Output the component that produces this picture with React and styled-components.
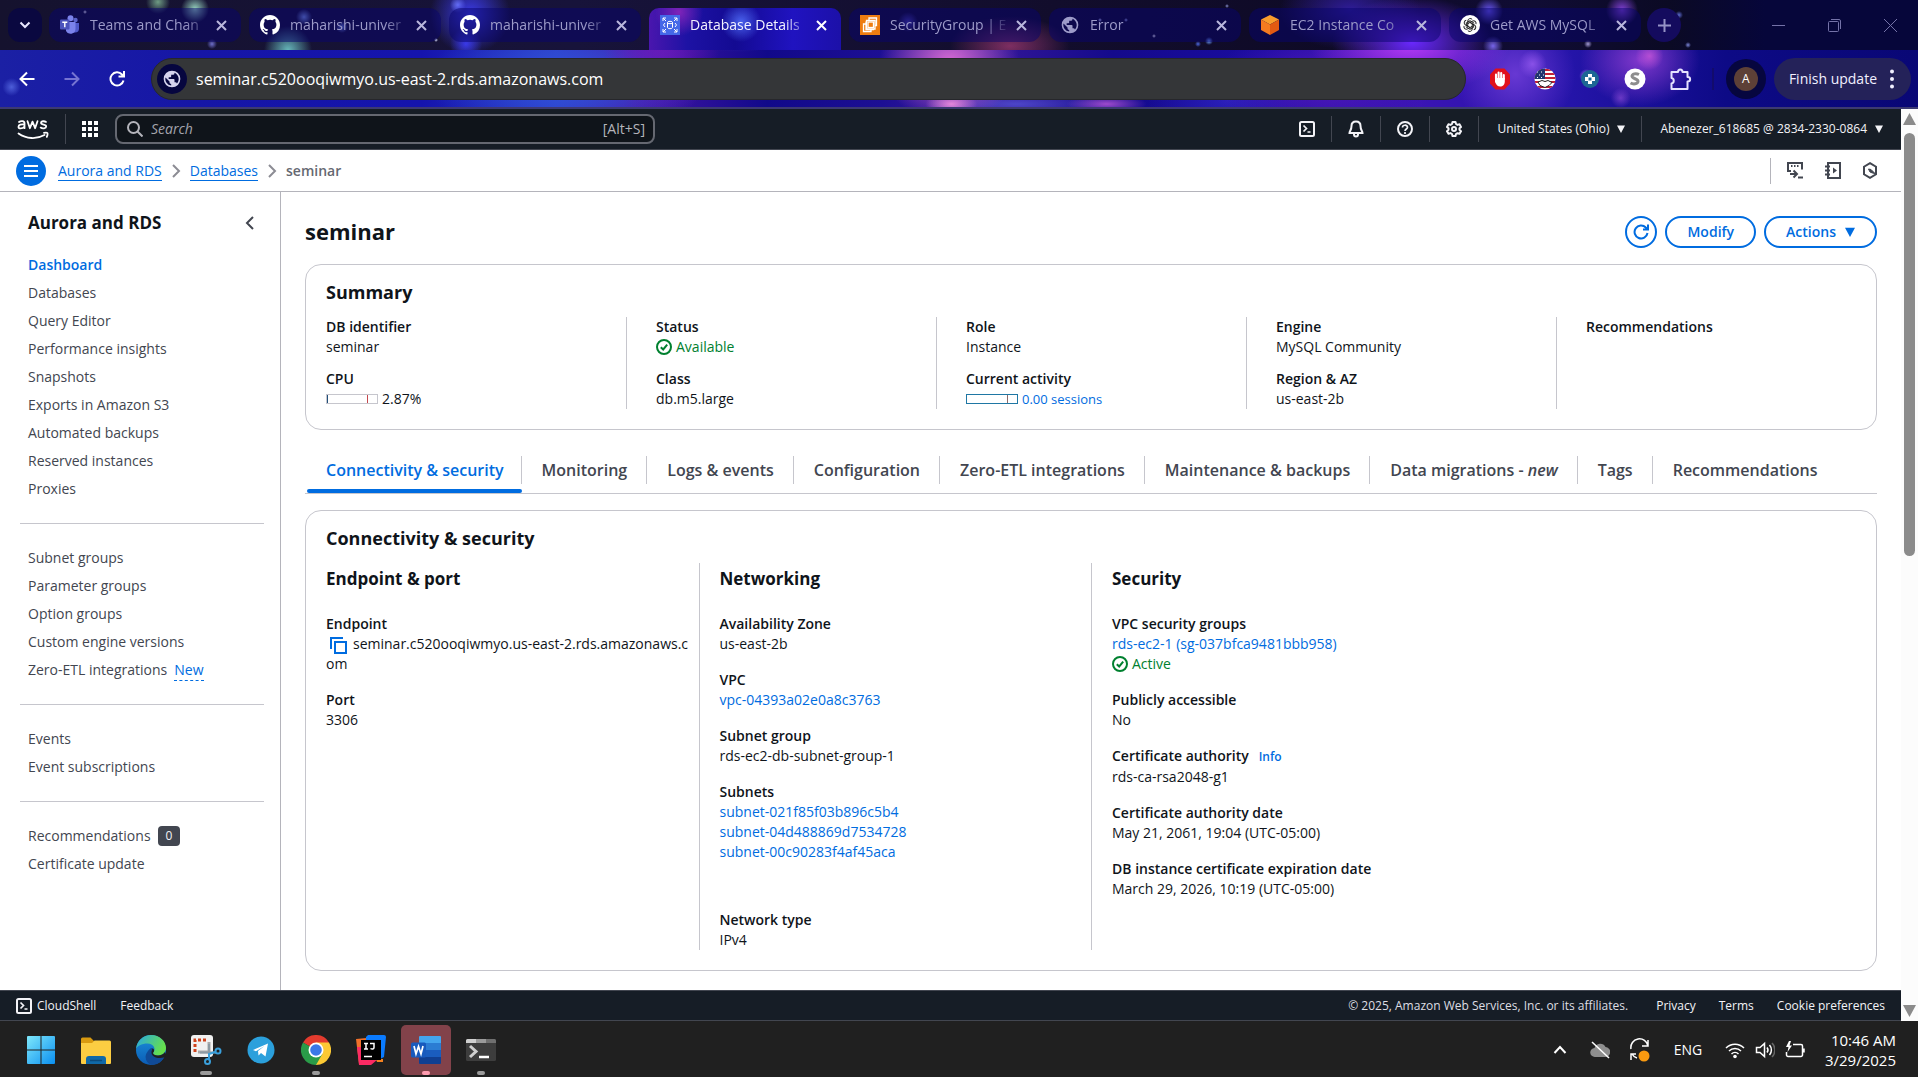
import React from "react";
import styled, { createGlobalStyle, css } from "styled-components";

const GlobalStyle = createGlobalStyle`
  *, *::before, *::after { box-sizing: border-box; }
  html, body { margin: 0; padding: 0; }
  body {
    font-family: "Open Sans", "Noto Sans", sans-serif;
    font-size: 14px;
    line-height: 20px;
    color: #0f141a;
    background: #ffffff;
  }
  button, input { font: inherit; color: inherit; }
  button { cursor: pointer; border: 0; background: none; padding: 0; }
  a { text-decoration: none; color: inherit; }
  h1, h2, h3, p, ul, ol, dl, dd { margin: 0; padding: 0; }
  ul, ol { list-style: none; }
  svg { display: block; flex: none; }
`;

const Screen = styled.div`
  min-height: 100vh;
  display: flex;
  flex-direction: column;
`;

/* ---------- browser frame ---------- */

const star = (x, y, r, c) => `radial-gradient(circle at ${x} ${y}px, ${c} 0, transparent ${r}px)`;
const glow = (x, y, rx, ry, c) => `radial-gradient(ellipse ${rx}px ${ry}px at ${x} ${y}px, ${c}, transparent)`;

const frameSky = [
  star("0.6%", 87, 9, "rgba(90,110,230,.8)"),
  star("82.7%", 76, 7, "rgba(190,150,250,.9)"),
  star("79.9%", 64, 14, "rgba(150,90,240,.8)"),
  star("86%", 56, 14, "rgba(210,90,220,.7)"),
  star("84.5%", 98, 10, "rgba(150,80,220,.6)"),
  glow("49.5%", 62, 70, 60, "rgba(222,110,214,.95)"),
  glow("49.6%", 104, 26, 12, "rgba(240,150,225,.95)"),
  glow("57.7%", 104, 40, 10, "rgba(190,90,220,.8)"),
  glow("53%", 104, 90, 14, "rgba(90,90,220,.7)"),
  glow("73.5%", 44, 100, 50, "rgba(190,60,250,.95)"),
  glow("79%", 74, 60, 60, "rgba(110,60,215,.9)"),
  glow("85.5%", 60, 60, 46, "rgba(140,60,210,.9)"),
  glow("69%", 84, 110, 60, "rgba(88,26,190,.8)"),
  glow("64%", 100, 80, 40, "rgba(50,40,200,.7)"),
  glow("34.5%", 30, 60, 90, "rgba(120,24,190,.9)"),
  glow("29.5%", 80, 140, 60, "rgba(50,86,220,.95)"),
  glow("38.5%", 22, 70, 30, "rgba(60,80,230,.9)"),
  "linear-gradient(90deg, #1b20a4 0, #1616a6 10%, #1514ad 22%, #2b3ac6 29%, #4617a8 33%, #11098a 40%, #1d0f94 46%, #3b1a9c 50%, #140a8c 58%, #1a0ca0 66%, #3a14b4 74%, #2414a8 82%, #0d0a86 90%, #090775 100%)",
].join(",");

const stripStars = [
  star("158px", 2, 12, "rgba(120,170,140,.9)"),
  star("195px", 9, 14, "rgba(150,210,190,1)"),
  star("288px", 50, 24, "rgba(110,200,200,.9)"),
  star("304px", 17, 8, "rgba(120,150,230,1)"),
  star("342px", 27, 6, "rgba(120,150,240,.9)"),
  star("470px", 14, 40, "rgba(60,60,240,.95)"),
  star("458px", 5, 8, "#9bb0ff"),
  star("466px", 44, 16, "rgba(60,60,250,.9)"),
  star("212px", 44, 5, "rgba(120,120,220,.9)"),
  star("85px", 12, 2, "#ffffff"),
  star("436px", 40, 2, "#d9dfff"),
  star("908px", 22, 10, "rgba(80,70,200,.8)"),
  star("1100px", 20, 2, "#c3c9ff"),
  star("1126px", 20, 2, "#9ca7e6"),
  star("1154px", 36, 2, "#ffffff"),
  star("1209px", 41, 4, "#6fa0ff"),
  star("1198px", 44, 3, "#4d68e0"),
  star("1227px", 6, 2, "#8a90d0"),
  star("1489px", 11, 14, "rgba(110,90,255,.95)"),
  star("1493px", 46, 10, "rgba(130,110,255,.9)"),
  star("1622px", 10, 16, "rgba(140,70,230,.9)"),
  star("1588px", 44, 4, "rgba(200,190,255,.8)"),
  star("1679px", 15, 4, "#5c6ad0"),
  star("1688px", 45, 3, "#7c86d8"),
].join(",");

const BrowserFrame = styled.header`
  background: ${frameSky};
  border-bottom: 2px solid #3c3a72;
`;

const TabStrip = styled.div`
  height: 50px;
  display: flex;
  align-items: flex-end;
  padding-left: 8px;
  background: ${stripStars},
    radial-gradient(ellipse 80px 46px at 1412px 42px, rgba(106, 40, 255, 1), transparent),
    radial-gradient(ellipse 70px 40px at 1350px 10px, rgba(60, 36, 200, 0.7), transparent),
    radial-gradient(ellipse 60px 30px at 1010px 46px, rgba(170, 60, 120, 0.7), transparent),
    linear-gradient(90deg, #15122e 0, #17133a 30%, #120d2c 55%, #0e0a26 70%, #100c34 80%, #0b0a24 87%, #06063a 92%, #06063a 100%);
`;

const RoundButton = styled.button`
  width: ${(p) => p.$size}px;
  height: ${(p) => p.$size}px;
  border-radius: ${(p) => p.$radius || p.$size}px;
  display: grid;
  place-items: center;
  flex: none;
  color: ${(p) => p.$ink || "#e8e6ff"};
  background: ${(p) => p.$fill || "transparent"};
`;

const TabSearch = styled.div`
  height: 42px;
  margin-right: 7px;
`;

const BrowserTabs = styled.ul`
  display: flex;
  gap: 8px;
  min-width: 0;
`;

const BrowserTab = styled.li`
  position: relative;
  flex: 0 1 192px;
  width: 192px;
  min-width: 60px;
  height: 42px;
  padding: 0 10px 8px 11px;
  display: flex;
  align-items: center;
  border-radius: 10px;
  color: ${(p) => (p.$active ? "#f4f3ff" : "#9d9bc9")};
  &::before {
    content: "";
    position: absolute;
    inset: 0 0 8px;
    border-radius: 12px;
    background: rgba(8, 3, 110, 0.5);
  }
  > * { position: relative; }
  ${(p) =>
    p.$active &&
    css`
      &::before {
        inset: 0;
        border-radius: 10px 10px 0 0;
        background: radial-gradient(circle at 92px 14px, #4a62ee 0, transparent 20px),
          radial-gradient(circle at 30px 4px, rgba(150, 40, 190, 0.8) 0, transparent 24px),
          linear-gradient(90deg, #4a16ae, #1d12a4 20%, #130a92 45%, #2013c0 75%, #1c10a8);
      }
    `}
`;

const TabLink = styled.a`
  flex: 1;
  min-width: 0;
  display: flex;
  align-items: center;
  gap: 10px;
`;

const TabTitle = styled.span`
  flex: 1;
  min-width: 0;
  overflow: hidden;
  white-space: nowrap;
  mask-image: linear-gradient(90deg, #000 78%, transparent 100%);
`;

const NewTab = styled.div`
  height: 42px;
  margin-left: 6px;
`;

const WindowControls = styled.div`
  margin-left: auto;
  height: 50px;
  display: flex;
  color: #7472a8;
`;

const WindowButton = styled.button`
  width: 56px;
  display: grid;
  place-items: center;
`;

const Toolbar = styled.div`
  height: 57px;
  display: flex;
  align-items: center;
  padding: 0 7px 0 11px;
`;

const NavButtons = styled.div`
  display: flex;
  gap: 13px;
  margin-right: 18px;
`;

const Omnibox = styled.label`
  flex: 1;
  min-width: 0;
  height: 42px;
  display: flex;
  align-items: center;
  gap: 9px;
  padding: 0 5px;
  border: 1px solid #26272b;
  border-radius: 21px;
  background: #343638;
`;

const Bubble = styled.span`
  width: 30px;
  height: 30px;
  border-radius: 50%;
  display: grid;
  place-items: center;
  background: #06063f;
  color: #d6d4ee;
`;

const AddressInput = styled.input`
  flex: 1;
  min-width: 0;
  border: 0;
  outline: 0;
  padding: 0;
  background: transparent;
  color: #ffffff;
  font-size: 16px;
  line-height: 24px;
`;

const Extensions = styled.div`
  display: flex;
  gap: 21px;
  margin-left: 22px;
`;

const ToolbarRule = styled.span`
  width: 2px;
  height: 22px;
  margin: 0 12px 0 20px;
  background: #120b6c;
`;

const Avatar = styled.span`
  width: 24px;
  height: 24px;
  border-radius: 50%;
  display: grid;
  place-items: center;
  background: #5d4037;
  color: #ffffff;
  font-size: 12px;
`;

const UpdateButton = styled.button`
  height: 42px;
  margin-left: 8px;
  padding: 0 11px 0 15px;
  display: flex;
  align-items: center;
  gap: 7px;
  border-radius: 21px;
  background: #242259;
  color: #f1f0ff;
  white-space: nowrap;
`;

/* ---------- page viewport ---------- */

const Viewport = styled.div`
  flex: 1;
  display: flex;
`;

const Page = styled.div`
  flex: 1;
  min-width: 0;
  display: flex;
  flex-direction: column;
`;

const ScrollTrack = styled.div`
  width: 17px;
  flex: none;
  display: flex;
  flex-direction: column;
  align-items: center;
  justify-content: space-between;
  padding: 4px 0;
  background: #fcfcfc;
`;

const ScrollBody = styled.div`
  flex: 1;
  width: 11px;
  padding: 8px 0;
`;

const ScrollThumb = styled.div`
  height: 49%;
  border-radius: 6px;
  background: #8b8b8b;
`;

const AwsHeader = styled.div`
  height: 41px;
  display: flex;
  align-items: center;
  padding: 0 18px 0 17px;
  background: #161d26;
  border-bottom: 1px solid #424650;
  color: #f3f3f7;
  font-size: 12px;
`;

const HeaderRule = styled.span`
  width: 1px;
  height: 30px;
  margin: 0 16px;
  background: #424650;
`;

const SearchBox = styled.label`
  flex: 0 1 540px;
  height: 30px;
  margin-left: 17px;
  padding: 0 8px 0 10px;
  display: flex;
  align-items: center;
  gap: 8px;
  border: 2px solid #656871;
  border-radius: 8px;
  background: #0f141a;
  color: #b4b4bb;
  font-size: 14px;
`;

const SearchInput = styled.input`
  flex: 1;
  min-width: 0;
  border: 0;
  outline: 0;
  padding: 0;
  background: transparent;
  &::placeholder { color: #a4a4ad; font-style: italic; opacity: 1; }
`;

const HeaderTools = styled.div`
  margin-left: auto;
  display: flex;
  align-items: center;
`;

const HeaderTool = styled.button`
  height: 26px;
  min-width: 49px;
  display: flex;
  align-items: center;
  justify-content: center;
  gap: 8px;
  border-left: ${(p) => (p.$first ? 0 : "1px solid #424650")};
  padding: ${(p) => (p.$text ? "0 16px 0 18px" : 0)};
  white-space: nowrap;
  font-weight: 500;
  &:last-child { padding-right: 0; }
`;

const CrumbBar = styled.div`
  height: 42px;
  display: flex;
  align-items: center;
  padding: 0 23px 0 16px;
  border-bottom: 1px solid #b4b4bb;
`;

const Crumbs = styled.ol`
  display: flex;
  align-items: center;
  gap: 7px;
  margin-left: 12px;
`;

const Crumb = styled.li`
  display: flex;
  align-items: center;
  gap: 7px;
  color: #656871;
  font-weight: ${(p) => (p.$current ? 600 : 400)};
  svg { color: #8c8c94; }
`;

const CrumbLink = styled.a`
  color: #006ce0;
  line-height: 19px;
  border-bottom: 1px solid #006ce0;
`;

const PanelTools = styled.div`
  margin-left: auto;
  height: 26px;
  display: flex;
  align-items: center;
  gap: 20px;
  padding-left: 15px;
  border-left: 1px solid #b4b4bb;
  color: #424650;
`;

const Workspace = styled.div`
  flex: 1;
  display: flex;
`;

const Sidebar = styled.nav`
  width: 281px;
  flex: none;
  padding: 19px 16px 20px 20px;
  border-right: 1px solid #b4b4bb;
  color: #424650;
`;

const SidebarTitle = styled.div`
  display: flex;
  align-items: center;
  justify-content: space-between;
  padding: 0 7px 0 8px;
  margin-bottom: 16px;
`;

const SidebarHeading = styled.h2`
  font-size: 17px;
  line-height: 24px;
  font-weight: 700;
  color: #0f141a;
`;

const NavGroup = styled.ul`
  & + & {
    margin-top: 20px;
    padding-top: 20px;
    border-top: 1px solid #c6c6cd;
  }
`;

const NavItem = styled.li`
  min-height: 28px;
  padding: 0 8px;
  display: flex;
  align-items: center;
  gap: 7px;
  color: ${(p) => (p.$current ? "#006ce0" : "inherit")};
  font-weight: ${(p) => (p.$current ? 600 : 400)};
`;

const NewFlag = styled.a`
  color: #006ce0;
  border-bottom: 1px dashed #006ce0;
`;

const CountBadge = styled.span`
  padding: 0 8px;
  border-radius: 4px;
  background: #424650;
  color: #f3f3f7;
  font-size: 12px;
  font-weight: 500;
`;

const Content = styled.main`
  flex: 1;
  min-width: 0;
  padding: 24px 24px 19px;
`;

const TitleRow = styled.div`
  display: flex;
  align-items: center;
  gap: 8px;
  height: 32px;
  margin-bottom: 16px;
`;

const PageTitle = styled.h1`
  flex: 1;
  padding-bottom: 2px;
  font-size: 22px;
  line-height: 30px;
  font-weight: 700;
`;

const PillButton = styled.button`
  height: 32px;
  min-width: 32px;
  padding: ${(p) => (p.$icon ? 0 : "0 20px")};
  display: flex;
  align-items: center;
  justify-content: center;
  gap: 9px;
  border: 2px solid #006ce0;
  border-radius: 20px;
  color: #006ce0;
  font-weight: 600;
`;

const Card = styled.section`
  border: 1px solid #c6c6cd;
  border-radius: 16px;
  padding: 14px 0 20px;
`;

const CardTitle = styled.h2`
  padding: 0 20px;
  margin-bottom: 12px;
  font-size: 18px;
  line-height: 26px;
  font-weight: 700;
`;

const SummaryGrid = styled.dl`
  display: grid;
  grid-template-columns: repeat(5, 1fr);
  padding: 0 10px;
`;

const SummaryColumn = styled.div`
  display: flex;
  flex-direction: column;
  gap: 12px;
  padding-left: 29px;
  border-left: 1px solid #c6c6cd;
  min-height: 92px;
  &:first-child { border-left: 0; padding-left: 10px; }
`;

const DetailGrid = styled.div`
  display: grid;
  grid-template-columns: repeat(4, 1fr);
`;

const DetailColumn = styled.section`
  padding: 3px 8px 0 20px;
  border-left: 1px solid #c6c6cd;
  &:first-child { border-left: 0; }
`;

const DetailHeading = styled.h3`
  margin-bottom: 22px;
  font-size: 17px;
  line-height: 26px;
  font-weight: 700;
`;

const DetailList = styled.dl`
  display: flex;
  flex-direction: column;
  gap: 16px;
`;

const Term = styled.dt`
  font-weight: 600;
`;

const Value = styled.dd`
  word-break: break-all;
`;

const Field = styled.div`
  padding-top: ${(p) => (p.$apart ? 32 : 0)}px;
`;

const TextLink = styled.a`
  color: #006ce0;
  font-size: ${(p) => (p.$small ? 13 : 14)}px;
`;

const InfoLink = styled.a`
  margin-left: 10px;
  color: #006ce0;
  font-size: 12px;
`;

const Status = styled.span`
  display: flex;
  align-items: center;
  gap: 4px;
  color: #00802f;
`;

const InlineRow = styled.span`
  display: flex;
  align-items: center;
  gap: 4px;
`;

const Meter = styled.span`
  width: 52px;
  height: 10px;
  display: flex;
  justify-content: space-between;
  border: 1px solid ${(p) => p.$edge};
  padding-right: 9px;
  &::before { content: ""; width: 1px; background: ${(p) => p.$level}; }
  &::after { content: ""; width: 1px; background: ${(p) => p.$limit}; }
`;

const CopyButton = styled.button`
  display: inline-block;
  vertical-align: middle;
  margin: 0 6px 0 4px;
  color: #006ce0;
`;

const TabBar = styled.div`
  display: flex;
  margin: 26px 0 16px;
  border-bottom: 1px solid #c6c6cd;
`;

const PageTab = styled.button`
  display: flex;
  flex-direction: column;
  gap: 5px;
  color: ${(p) => (p.$selected ? "#006ce0" : "#424650")};
  font-size: 16px;
  font-weight: 600;
  white-space: nowrap;
  &::after {
    content: "";
    height: 4px;
    align-self: stretch;
    margin-left: 2px;
    border-radius: 2px;
    background: ${(p) => (p.$selected ? "#006ce0" : "transparent")};
  }
`;

const PageTabLabel = styled.span`
  line-height: 28px;
  padding: ${(p) => (p.$first ? "0 17px 0 21px" : "0 19px 0 20px")};
  border-right: ${(p) => (p.$last ? 0 : "1px solid #c6c6cd")};
`;

const Footer = styled.footer`
  height: 31px;
  display: flex;
  align-items: center;
  padding: 0 16px;
  border-top: 1px solid #424650;
  border-bottom: 1px solid #424650;
  background: #161d26;
  color: #f3f3f7;
  font-size: 12px;
`;

const FooterButton = styled.button`
  display: flex;
  align-items: center;
  gap: 5px;
  margin-right: 24px;
  font-weight: 500;
`;

const Legal = styled.div`
  margin-left: auto;
  display: flex;
  gap: 23px;
`;

const Copyright = styled.span`
  color: #dedee3;
  margin-right: 5px;
`;

/* ---------- taskbar ---------- */

const Taskbar = styled.div`
  height: 56px;
  display: flex;
  align-items: center;
  justify-content: space-between;
  padding: 2px 22px 0 16px;
  background: #202020;
  color: #ffffff;
`;

const TaskApps = styled.div`
  display: flex;
  gap: 5px;
`;

const TaskApp = styled.button`
  position: relative;
  width: 50px;
  height: 50px;
  display: grid;
  place-items: center;
  border-radius: 5px;
  background: ${(p) => (p.$alert ? "#82424a" : "transparent")};
  &::after {
    content: "";
    position: absolute;
    left: 50%;
    bottom: 0;
    width: ${(p) => p.$mark || 0}px;
    height: 4px;
    border-radius: 2px;
    transform: translateX(-50%);
    background: ${(p) => (p.$alert ? "#ff9cb0" : "#9a9a9a")};
  }
`;

const Tray = styled.div`
  display: flex;
  align-items: center;
`;

const TrayButton = styled.button`
  width: ${(p) => p.$w || 40}px;
  display: grid;
  place-items: center;
`;

const TrayStatus = styled.button`
  display: flex;
  gap: 10px;
  margin: 0 20px 0 9px;
`;

const Clock = styled.time`
  text-align: right;
  font-size: 15px;
`;

/* ---------- icons ---------- */

const Svg = ({ s = 16, h, vb = "0 0 16 16", w = 2, children }) => (
  <svg width={s} height={h || s} viewBox={vb} fill="none" stroke="currentColor" strokeWidth={w} aria-hidden="true">
    {children}
  </svg>
);
const CloseX = () => (
  <Svg s={11} vb="0 0 11 11" w={2}><path d="M1 1l9 9M10 1l-9 9" /></Svg>
);
const Caret = ({ s = 8 }) => (
  <Svg s={s} vb="0 0 8 8" w={0}><path d="M0 0.5h8L4 8z" fill="currentColor" /></Svg>
);
const ShellIcon = () => (
  <Svg><rect x="1" y="1" width="14" height="14" rx="1.5" /><path d="M4.500 4.500l3 3-3 3M8.500 11h3" strokeWidth="1.700" /></Svg>
);
const Globe = ({ s = 18 }) => (
  <svg width={s} height={s} viewBox="0 0 24 24" fill="currentColor" aria-hidden="true">
    <path d="M12 2a10 10 0 100 20 10 10 0 000-20zm-1 17.930A8 8 0 014.200 10.200L9 15v1a2 2 0 002 2v1.930zm6.900-2.540A2 2 0 0016 16h-1v-3a1 1 0 00-1-1H8v-2h2a1 1 0 001-1V7h2a2 2 0 002-2v-.410a8 8 0 012.900 12.800z" />
  </svg>
);
const GithubIcon = () => (
  <svg width="20" height="20" viewBox="0 0 16 16" aria-hidden="true">
    <path fill="#fff" d="M8 0C3.58 0 0 3.58 0 8c0 3.54 2.29 6.53 5.47 7.59.4.07.55-.17.55-.38 0-.19-.01-.82-.01-1.49-2.01.37-2.53-.49-2.69-.94-.09-.23-.48-.94-.82-1.13-.28-.15-.68-.52-.01-.53.63-.01 1.08.58 1.23.82.72 1.21 1.87.87 2.33.66.07-.52.28-.87.51-1.07-1.78-.2-3.64-.89-3.64-3.95 0-.87.31-1.59.82-2.15-.08-.2-.36-1.02.08-2.12 0 0 .67-.21 2.2.82a7.6 7.6 0 014 0c1.53-1.04 2.2-.82 2.2-.82.44 1.1.16 1.92.08 2.12.51.56.82 1.27.82 2.15 0 3.07-1.87 3.75-3.65 3.95.29.25.54.73.54 1.48 0 1.07-.01 1.93-.01 2.2 0 .21.15.46.55.38A8 8 0 0016 8c0-4.42-3.58-8-8-8z" />
  </svg>
);
const TeamsIcon = () => (
  <svg width="20" height="20" viewBox="0 0 20 20" aria-hidden="true">
    <circle cx="15.5" cy="5" r="2.2" fill="#5b63c9" /><circle cx="10.5" cy="3.2" r="3" fill="#7b83eb" />
    <path d="M12 8h7v5.500a4 4 0 01-4 4h-2z" fill="#5059c9" /><path d="M6 7h9.500v7a5 5 0 01-9.500 2z" fill="#7b83eb" />
    <rect y="4.500" width="9.500" height="10" rx="1" fill="#4b53bc" /><path d="M2.300 7.200h5M4.800 7.200v5" stroke="#fff" strokeWidth="1.400" />
  </svg>
);
const RdsIcon = () => (
  <svg width="20" height="20" viewBox="0 0 20 20" fill="none" stroke="#fff" strokeWidth="1" aria-hidden="true">
    <rect width="20" height="20" fill="#4468e8" stroke="none" />
    <path d="M3 6V3h3M3 3l3 3M17 6V3h-3M17 3l-3 3M3 14v3h3M3 17l3-3M17 14v3h-3M17 17l-3-3" />
    <ellipse cx="10" cy="7.500" rx="2.500" ry="1.200" /><path d="M7.500 7.500v5c0 1.600 5 1.600 5 0v-5M5 8l-1.500 2L5 12M15 8l1.500 2-1.500 2" />
  </svg>
);
const Ec2Icon = () => (
  <svg width="20" height="20" viewBox="0 0 20 20" fill="none" stroke="#fff" strokeWidth="1.300" aria-hidden="true">
    <rect width="20" height="20" fill="#ee7d10" stroke="none" />
    <rect x="8" y="7" width="5.500" height="5.500" /><path d="M5.500 9H3.500v7.500h7.500v-1.500M6 6.500v8h8M9 5V3h7.500v7.500h-1.500M6.500 5.500h8.500v8.500H6.500z" />
  </svg>
);
const CubeIcon = () => (
  <svg width="20" height="20" viewBox="0 0 20 20" aria-hidden="true">
    <path d="M10 0l9 4.500-9 5-9-5z" fill="#f99d2c" /><path d="M1 4.500l9 5V20l-9-5z" fill="#f47b20" /><path d="M19 4.500l-9 5V20l9-5z" fill="#e35a12" />
  </svg>
);
const GptIcon = () => (
  <svg width="20" height="20" viewBox="0 0 20 20" fill="none" stroke="#222" strokeWidth="1" aria-hidden="true">
    <circle cx="10" cy="10" r="10" fill="#fff" stroke="none" />
    {[0, 60, 120, 180, 240, 300].map((a) => (
      <path key={a} transform={`rotate(${a} 10 10)`} d="M7.800 8.700V6a2.500 2.500 0 014.400-1.600M7.800 8.700l3.600-2.100 2.800 1.600" />
    ))}
  </svg>
);
const AwsLogo = () => (
  <svg width="32" height="22" viewBox="0 0 32 22" fill="none" stroke="#fff" strokeLinecap="round" aria-hidden="true">
    <path strokeWidth="1.800" d="M2 4c2-1.500 5.500-1.300 5.500 1.200v5M7.500 6.500C4.500 6 1.500 6.500 1.500 8.700s3.500 2.500 6 0" />
    <path strokeWidth="1.800" strokeLinejoin="round" d="M10.500 3.200l2.400 7 2.600-6.500 2.600 6.500 2.400-7" />
    <path strokeWidth="1.800" d="M29 3.900c-1.500-1-5-1-5 .9 0 2.400 5.200 1.300 5.200 3.700 0 2-3.700 2.400-5.500 1.100" />
    <path strokeWidth="1.800" d="M1.500 15.500c8 5.500 18 6 26 1.500M27 14.800c3.500-.8 4.500 0 2.800 4" />
  </svg>
);
const CheckCircle = () => (
  <Svg><circle cx="8" cy="8" r="7" /><path d="M4.800 8.200l2.400 2.300 4-4.800" /></Svg>
);
const GridIcon = () => (
  <svg width="16" height="16" viewBox="0 0 16 16" fill="#fff" aria-hidden="true">
    {[0, 6, 12].flatMap((x) => [0, 6, 12].map((y) => <rect key={x + "-" + y} x={x} y={y} width="4" height="4" />))}
  </svg>
);

const blockerIcon = (
  <svg width="24" height="24" viewBox="0 0 24 24" aria-hidden="true">
    <path d="M7.500 1.500h9l5.500 6v9l-5.500 6h-9l-5.500-6v-9z" fill="#e0101c" />
    <path d="M8 12V7.500M10.600 11V5.500M13.200 11V6M15.800 12V8" stroke="#fff" strokeWidth="2.100" strokeLinecap="round" />
    <path d="M7 11h9.800v3.500c0 3-2 5-4.600 5S8.500 18 7 15z" fill="#fff" />
  </svg>
);
const flagIcon = (
  <svg width="24" height="24" viewBox="0 0 24 24" aria-hidden="true">
    <defs><clipPath id="flagDisc"><circle cx="12" cy="12" r="10.500" /></clipPath></defs>
    <g clipPath="url(#flagDisc)">
      <rect width="24" height="24" fill="#fff" />
      <path d="M0 3h24M0 7h24M0 11h24M0 15h24M0 20h24" stroke="#c42035" strokeWidth="2" />
      <rect width="12" height="12" fill="#22356f" />
      <path d="M4 5h1M8 5h1M6 8h1M10 8h1M4 10.500h1M8 10.500h1" stroke="#fff" strokeWidth="1" />
      <path d="M5 15l4-1.500 3 1 3-1 4 2-3 3-4 2-5-2z" fill="#fff" stroke="#222" strokeWidth="1" />
    </g>
  </svg>
);
const crossIcon = (
  <svg width="24" height="24" viewBox="0 0 24 24" aria-hidden="true">
    <circle cx="12" cy="12" r="9" fill="#1d6794" /><path d="M12 7v10M7 12h10" stroke="#fff" strokeWidth="4" />
    <rect x="10.500" y="10.500" width="3" height="3" fill="#1d6794" />
  </svg>
);
const swirlIcon = (
  <svg width="24" height="24" viewBox="0 0 24 24" aria-hidden="true">
    <circle cx="12" cy="12" r="10.500" fill="#fff" />
    <path d="M16 7.500c-3-1.500-7-.8-7 1.800 0 2.500 6.500 2.500 6 5.200-.4 2.600-4.600 3-7.500 1.500" fill="none" stroke="#8d8d8d" strokeWidth="3" />
  </svg>
);
const puzzleIcon = (
  <svg width="24" height="24" viewBox="0 0 24 24" fill="none" stroke="#e6e3ff" strokeWidth="2" aria-hidden="true">
    <path d="M3.500 5h6.500c0-3.500 4.500-3.500 4.500 0h5v5c3.500 0 3.500 4.500 0 4.500V22h-16v-5.500c3-.5 3-5 0-5.500z" strokeLinejoin="round" />
  </svg>
);

const appIcons = {
  start: (
    <svg width="30" height="30" viewBox="0 0 30 30" aria-hidden="true">
      <defs><linearGradient id="win" x1="0" y1="0" x2="1" y2="1"><stop stopColor="#7fe8fb" /><stop offset="1" stopColor="#0a8ff0" /></linearGradient></defs>
      <path fill="url(#win)" d="M1 2a1 1 0 011-1h12.500v13.500H1zM15.500 1H28a1 1 0 011 1v12.500H15.500zM1 15.500h13.500V29H2a1 1 0 01-1-1zM15.500 15.500H29V28a1 1 0 01-1 1H15.500z" />
    </svg>
  ),
  folder: (
    <svg width="30" height="30" viewBox="0 0 30 30" aria-hidden="true">
      <path d="M0 4a1.500 1.500 0 011.500-1.500h8L13 6v4H0z" fill="#d99a10" /><path d="M0 8l11 0 2.500-2.500h15A1.500 1.500 0 0130 7v21a1 1 0 01-1 1H1a1 1 0 01-1-1z" fill="#fccd42" />
      <path d="M5 29v-5a3 3 0 013-3h14a3 3 0 013 3v5z" fill="#1069a8" /><path d="M9 25.500h12" stroke="#0b4a7c" strokeWidth="1.500" />
    </svg>
  ),
  edge: (
    <svg width="30" height="30" viewBox="0 0 30 30" aria-hidden="true">
      <defs>
        <linearGradient id="edgeTop" x1="0" y1="0" x2="1" y2=".4"><stop stopColor="#27a6e5" /><stop offset="1" stopColor="#66e04c" /></linearGradient>
        <linearGradient id="edgeLow" x1="0" y1="0" x2="0" y2="1"><stop stopColor="#1a90da" /><stop offset="1" stopColor="#0b5cb5" /></linearGradient>
      </defs>
      <circle cx="15" cy="15" r="15" fill="url(#edgeLow)" />
      <path d="M0 14C1 5 8 0 15 0c8.500 0 15 6 15 13 0 4.500-3.500 7.500-8 7.500-4 0-6-2-4.500-3.500C20 14 18 8.500 11.500 8.500 5.500 8.500 1 11 0 14z" fill="url(#edgeTop)" />
      <path d="M17.500 17c-1.500 1.500.5 4.500 4.500 4.500 3 0 5-1 7-2.500A13.500 13.500 0 0115 30C10 28 8 22 11 17.500 12.500 15 14 13.500 15.500 13c2.500 0 3.500 2.500 2 4z" fill="#104a96" />
      <path d="M17.500 17c-1.500 1.500.5 3.500 4.500 3.500 3 0 5.500-1.500 7-3.500l1.500 3.500-2.500 2-4 .5c-5 0-9-2-8.500-6.500l1-3c1.500.5 2 2.500 1 3.500z" fill="#202020" />
    </svg>
  ),
  snip: (
    <svg width="32" height="30" viewBox="0 0 32 30" fill="none" aria-hidden="true">
      <rect x="1" width="22" height="22" rx="3" fill="#f1f1f1" /><path d="M19 7v10H8" stroke="#a9a9a9" strokeWidth="3" />
      <path d="M5 17V5h12" stroke="#d0421b" strokeWidth="3" strokeDasharray="3 2" />
      <path d="M19 9v12M10 17.500l16 0" stroke="#8d9aa3" strokeWidth="2" />
      <circle cx="28" cy="16" r="2.500" stroke="#3aa0dc" strokeWidth="2" /><circle cx="17.500" cy="26.500" r="2.500" stroke="#3aa0dc" strokeWidth="2" /><path d="M19 24v-5l6-2" stroke="#3aa0dc" strokeWidth="2" />
    </svg>
  ),
  telegram: (
    <svg width="28" height="28" viewBox="0 0 28 28" aria-hidden="true">
      <circle cx="14" cy="14" r="13.500" fill="#2ba0dc" /><path d="M6 14L21 7.500l-2.500 13-4.500-3.500-2.500 2.500-.5-4.500L17.500 10 9 15.200z" fill="#fff" />
    </svg>
  ),
  chrome: (
    <svg width="30" height="30" viewBox="0 0 30 30" aria-hidden="true">
      <path d="M15 15L2 7.500a15 15 0 0126 0z" fill="#e33b2e" /><path d="M15 15V7.500h13A15 15 0 0115 30z" fill="#fcc934" />
      <path d="M15 15l6.500 3.700L15 30A15 15 0 012 7.500z" fill="#2a9b48" /><circle cx="15" cy="15" r="7.500" fill="#fff" /><circle cx="15" cy="15" r="5.800" fill="#3b78e7" />
    </svg>
  ),
  idea: (
    <svg width="30" height="30" viewBox="0 0 30 30" aria-hidden="true">
      <path d="M0 4l11-1-2 12v13l-6 1z" fill="#f0702a" /><path d="M1 12l8 0 0 12 12 1-6 5H3z" fill="#fb2a63" /><path d="M10 2l2-2h16a2 2 0 012 2l-2 20-4 2V5H10z" fill="#0a7bff" /><path d="M20 24h7v3l-6 0z" fill="#f58220" />
      <rect x="5" y="5" width="20" height="20" fill="#000" /><path d="M8 8.500h4M10 8.500v5.500M8 14h4M14 8.500h4v4c0 1.500-2 2-3.500 1M8 21.500h8" stroke="#fff" strokeWidth="1.500" fill="none" />
    </svg>
  ),
  word: (
    <svg width="30" height="30" viewBox="0 0 30 30" aria-hidden="true">
      <path d="M8 2a1 1 0 011-1h20a1 1 0 011 1v6H8z" fill="#44a5ee" /><path d="M8 8h22v7H8z" fill="#2b7cd3" /><path d="M8 15h22v7H8z" fill="#1a5dbe" /><path d="M8 22h22v6a1 1 0 01-1 1H9a1 1 0 01-1-1z" fill="#103f91" />
      <rect y="7.500" width="15" height="15" rx="1.500" fill="#185abd" /><path d="M3 11l2 8 2.500-7.500L10 19l2-8" stroke="#fff" strokeWidth="1.700" fill="none" />
    </svg>
  ),
  terminal: (
    <svg width="30" height="24" viewBox="0 0 30 24" aria-hidden="true">
      <rect y="1" width="30" height="22" rx="1.500" fill="#3d3d3d" /><path d="M0 5V2.500A1.500 1.500 0 011.500 1H10v4z" fill="#cfcfcf" /><path d="M10 1h10v4H10z" fill="#9a9a9a" /><path d="M20 1h8.500A1.500 1.500 0 0130 2.500V5H20z" fill="#6f6f6f" />
      <path d="M4 8l6 5.500L4 19" stroke="#cfcfcf" strokeWidth="3" fill="none" /><path d="M13 19h10" stroke="#fff" strokeWidth="2.500" />
    </svg>
  ),
};

/* ---------- data ---------- */

const browserTabs = [
  { title: "Teams and Chan", icon: <TeamsIcon /> },
  { title: "maharishi-univer", icon: <GithubIcon /> },
  { title: "maharishi-univer", icon: <GithubIcon /> },
  { title: "Database Details", icon: <RdsIcon />, active: true },
  { title: "SecurityGroup | E", icon: <Ec2Icon /> },
  { title: "Error", icon: <Globe s={20} /> },
  { title: "EC2 Instance Co", icon: <CubeIcon /> },
  { title: "Get AWS MySQL", icon: <GptIcon /> },
];

const navGroups = [
  ["Dashboard", "Databases", "Query Editor", "Performance insights", "Snapshots", "Exports in Amazon S3", "Automated backups", "Reserved instances", "Proxies"],
  ["Subnet groups", "Parameter groups", "Option groups", "Custom engine versions", "Zero-ETL integrations"],
  ["Events", "Event subscriptions"],
  ["Recommendations", "Certificate update"],
];

const pageTabs = [
  "Connectivity & security", "Monitoring", "Logs & events", "Configuration", "Zero-ETL integrations",
  "Maintenance & backups", <>Data migrations - <i>new</i></>, "Tags", "Recommendations",
];

const summary = [
  [["DB identifier", "seminar"], ["CPU", <InlineRow><Meter $edge="#c6c6cd" $level="#22507a" $limit="#c4474d" />2.87%</InlineRow>]],
  [["Status", <Status><CheckCircle />Available</Status>], ["Class", "db.m5.large"]],
  [["Role", "Instance"], ["Current activity", <InlineRow><Meter $edge="#1f77a4" $level="transparent" $limit="#8a6a6a" /><TextLink $small href="#sessions">0.00 sessions</TextLink></InlineRow>]],
  [["Engine", "MySQL Community"], ["Region & AZ", "us-east-2b"]],
  [["Recommendations", ""]],
];

const apps = [
  ["start", "Start"], ["folder", "File Explorer"], ["edge", "Edge"], ["snip", "Snipping Tool", 12], ["telegram", "Telegram"],
  ["chrome", "Chrome", 8], ["idea", "IntelliJ IDEA"], ["word", "Word", 8, true], ["terminal", "Terminal", 8],
];

function DetailField({ label, info, apart, children }) {
  return (
    <Field $apart={apart}>
      <Term>{label}{info && <InfoLink href="#info">Info</InfoLink>}</Term>
      {React.Children.map(children, (c) => <Value>{c}</Value>)}
    </Field>
  );
}

function Browser() {
  return (
    <BrowserFrame>
      <TabStrip>
        <TabSearch>
          <RoundButton $size={34} $radius={12} $fill="#0a0840" aria-label="Search tabs"><Svg s={12} vb="0 0 12 12"><path d="M1.500 3.500L6 8l4.500-4.500" /></Svg></RoundButton>
        </TabSearch>
        <BrowserTabs>
          {browserTabs.map((t, i) => (
            <BrowserTab key={i} $active={t.active}>
              <TabLink href="#tab">{t.icon}<TabTitle>{t.title}</TabTitle></TabLink>
              <RoundButton $size={20} $ink={t.active ? "#ffffff" : "#b9b7dc"} aria-label="Close tab"><CloseX /></RoundButton>
            </BrowserTab>
          ))}
        </BrowserTabs>
        <NewTab>
          <RoundButton $size={34} $fill="#140b5e" $ink="#9593c6" aria-label="New tab"><Svg s={13} vb="0 0 13 13"><path d="M6.500 0v13M0 6.500h13" /></Svg></RoundButton>
        </NewTab>
        <WindowControls>
          <WindowButton aria-label="Minimize"><Svg s={13} vb="0 0 13 13" w={1}><path d="M0 6.500h13" /></Svg></WindowButton>
          <WindowButton aria-label="Restore"><Svg s={13} vb="0 0 13 13" w={1}><rect x=".5" y="2.500" width="10" height="10" rx="1" /><path d="M3 .5h8a1.500 1.500 0 011.500 1.500v8" /></Svg></WindowButton>
          <WindowButton aria-label="Close"><Svg s={13} vb="0 0 13 13" w={1}><path d="M0 0l13 13M13 0L0 13" /></Svg></WindowButton>
        </WindowControls>
      </TabStrip>
      <Toolbar>
        <NavButtons>
          <RoundButton $size={32} $ink="#ffffff" aria-label="Back"><Svg><path d="M15.500 8H1.500M8 1.500L1.500 8 8 14.500" /></Svg></RoundButton>
          <RoundButton $size={32} $ink="#7674d2" aria-label="Forward"><Svg><path d="M.5 8h14M8 1.500L14.500 8 8 14.500" /></Svg></RoundButton>
          <RoundButton $size={32} $ink="#ffffff" aria-label="Reload"><Svg><path d="M14.500 9.500A6.600 6.600 0 1113 3.500l1.500 1.500M15 0v5.500H9.500" /></Svg></RoundButton>
        </NavButtons>
        <Omnibox>
          <Bubble><Globe s={20} /></Bubble>
          <AddressInput aria-label="Address" defaultValue="seminar.c520ooqiwmyo.us-east-2.rds.amazonaws.com" />
        </Omnibox>
        <Extensions>
          {[blockerIcon, flagIcon, crossIcon, swirlIcon, puzzleIcon].map((icon, i) => (
            <RoundButton key={i} $size={24} aria-label={`Extension ${i + 1}`}>{icon}</RoundButton>
          ))}
        </Extensions>
        <ToolbarRule />
        <RoundButton $size={40} $fill="#06063f" aria-label="Profile"><Avatar>A</Avatar></RoundButton>
        <UpdateButton>
          Finish update
          <svg width="16" height="20" viewBox="0 0 16 20" fill="currentColor" aria-hidden="true"><circle cx="8" cy="2.500" r="2" /><circle cx="8" cy="10" r="2" /><circle cx="8" cy="17.500" r="2" /></svg>
        </UpdateButton>
      </Toolbar>
    </BrowserFrame>
  );
}

function AwsBar() {
  return (
    <AwsHeader>
      <AwsLogo />
      <HeaderRule />
      <button aria-label="Services"><GridIcon /></button>
      <SearchBox>
        <Svg><circle cx="6.500" cy="6.500" r="5.500" /><path d="M10.500 10.500l5 5" /></Svg>
        <SearchInput type="search" placeholder="Search" aria-label="Search" />
        <span>[Alt+S]</span>
      </SearchBox>
      <HeaderTools>
        <HeaderTool $first aria-label="CloudShell"><ShellIcon /></HeaderTool>
        <HeaderTool aria-label="Notifications"><Svg h={18} vb="0 0 16 18"><path d="M8 1.500c-3 0-4.500 2-4.500 4.500 0 4-2 5-2 7h13c0-2-2-3-2-7 0-2.500-1.500-4.500-4.500-4.500zM6 13v1.500a2 2 0 004 0V13" /></Svg></HeaderTool>
        <HeaderTool aria-label="Help"><Svg><circle cx="8" cy="8" r="7" /><path d="M5.500 6.500C5.500 3.500 10.500 3.500 10.500 6.300 10.500 8 8 8 8 10M8 11v2" strokeWidth="1.700" /></Svg></HeaderTool>
        <HeaderTool aria-label="Settings"><Svg><path strokeLinejoin="round" d="M6.500 1h3l.5 2 1.500.9 2-.6 1.500 2.600L13.500 7.300v1.500l1.500 1.400-1.500 2.600-2-.6-1.500.9-.5 2h-3L6 13l-1.500-.9-2 .6L1 10.200l1.500-1.400V7.300L1 5.900l1.500-2.600 2 .6L6 3z" /><circle cx="8" cy="8" r="2" /></Svg></HeaderTool>
        <HeaderTool $text>United States (Ohio)<Caret /></HeaderTool>
        <HeaderTool $text>Abenezer_618685 @ 2834-2330-0864<Caret /></HeaderTool>
      </HeaderTools>
    </AwsHeader>
  );
}

const Chevron = () => <Svg s={14} vb="0 0 14 14"><path d="M4 1l6 6-6 6" /></Svg>;

function Breadcrumbs() {
  return (
    <CrumbBar>
      <RoundButton $size={30} $fill="#006ce0" $ink="#ffffff" aria-label="Toggle navigation"><Svg s={14} vb="0 0 14 14"><path d="M0 2h14M0 7h14M0 12h14" /></Svg></RoundButton>
      <Crumbs>
        <Crumb><CrumbLink href="#rds">Aurora and RDS</CrumbLink><Chevron /></Crumb>
        <Crumb><CrumbLink href="#databases">Databases</CrumbLink><Chevron /></Crumb>
        <Crumb $current>seminar</Crumb>
      </Crumbs>
      <PanelTools>
        <button aria-label="Shell drawer"><Svg s={18} h={17} vb="0 0 18 17"><path d="M5 9H2V1h14v6.500M5 4h1.500M8 4h1.500M11 4h1.500M4 12h6.500M7.500 8.500L11 12l-3.500 3.500M12 15.500h5" /></Svg></button>
        <button aria-label="Tutorials"><Svg s={18} h={17} vb="0 0 18 17"><path d="M4 1h12v15H4zM1 4.500h5M1 8.500h5M1 12.500h5" /><path d="M9 5.500v6l4-3z" fill="currentColor" strokeWidth="0" /></Svg></button>
        <button aria-label="Recommendations"><Svg s={16} h={17} vb="0 0 16 17"><path d="M8 1.200l6 3.500v7.600l-6 3.500-6-3.500V4.700z" /><path d="M6.500 7l2.500.5 4 4-2.500-.5-2.500-1z" fill="currentColor" strokeWidth="1" /></Svg></button>
      </PanelTools>
    </CrumbBar>
  );
}

function SideNav() {
  return (
    <Sidebar>
      <SidebarTitle>
        <SidebarHeading>Aurora and RDS</SidebarHeading>
        <button aria-label="Close navigation"><Svg s={14} h={16} vb="0 0 14 16"><path d="M10 2L4 8l6 6" /></Svg></button>
      </SidebarTitle>
      {navGroups.map((g) => (
        <NavGroup key={g[0]}>
          {g.map((t) => (
            <NavItem key={t} $current={t === "Dashboard"}>
              <a href="#nav">{t}</a>
              {t === "Zero-ETL integrations" && <NewFlag href="#new">New</NewFlag>}
              {t === "Recommendations" && <CountBadge>0</CountBadge>}
            </NavItem>
          ))}
        </NavGroup>
      ))}
    </Sidebar>
  );
}

function DatabasePage() {
  return (
    <Content>
      <TitleRow>
        <PageTitle>seminar</PageTitle>
        <PillButton $icon aria-label="Refresh"><Svg><path d="M14.500 9A6.500 6.500 0 1112.800 3.500L15 5.500M15 .5v5H10" /></Svg></PillButton>
        <PillButton>Modify</PillButton>
        <PillButton>Actions<Caret s={10} /></PillButton>
      </TitleRow>
      <Card>
        <CardTitle>Summary</CardTitle>
        <SummaryGrid>
          {summary.map((col, i) => (
            <SummaryColumn key={i}>
              {col.map(([k, v]) => <div key={k}><Term>{k}</Term><Value>{v}</Value></div>)}
            </SummaryColumn>
          ))}
        </SummaryGrid>
      </Card>
      <TabBar role="tablist">
        {pageTabs.map((t, i) => (
          <PageTab key={i} role="tab" aria-selected={i === 0} $selected={i === 0}>
            <PageTabLabel $first={i === 0} $last={i === pageTabs.length - 1}>{t}</PageTabLabel>
          </PageTab>
        ))}
      </TabBar>
      <Card>
        <CardTitle>Connectivity &amp; security</CardTitle>
        <DetailGrid>
          <DetailColumn>
            <DetailHeading>Endpoint &amp; port</DetailHeading>
            <DetailList>
              <DetailField label="Endpoint">
                <>
                  <CopyButton aria-label="Copy endpoint"><Svg s={17} h={17} vb="0 0 17 17"><path d="M1 12V1h12" /><rect x="5" y="5" width="11" height="11" /></Svg></CopyButton>
                  seminar.c520ooqiwmyo.us-east-2.rds.amazonaws.com
                </>
              </DetailField>
              <DetailField label="Port">3306</DetailField>
            </DetailList>
          </DetailColumn>
          <DetailColumn>
            <DetailHeading>Networking</DetailHeading>
            <DetailList>
              <DetailField label="Availability Zone">us-east-2b</DetailField>
              <DetailField label="VPC"><TextLink href="#vpc">vpc-04393a02e0a8c3763</TextLink></DetailField>
              <DetailField label="Subnet group">rds-ec2-db-subnet-group-1</DetailField>
              <DetailField label="Subnets">
                <TextLink href="#subnet">subnet-021f85f03b896c5b4</TextLink>
                <TextLink href="#subnet">subnet-04d488869d7534728</TextLink>
                <TextLink href="#subnet">subnet-00c90283f4af45aca</TextLink>
              </DetailField>
              <DetailField label="Network type" apart>IPv4</DetailField>
            </DetailList>
          </DetailColumn>
          <DetailColumn>
            <DetailHeading>Security</DetailHeading>
            <DetailList>
              <DetailField label="VPC security groups">
                <TextLink href="#sg">rds-ec2-1 (sg-037bfca9481bbb958)</TextLink>
                <Status><CheckCircle />Active</Status>
              </DetailField>
              <DetailField label="Publicly accessible">No</DetailField>
              <DetailField label="Certificate authority" info>rds-ca-rsa2048-g1</DetailField>
              <DetailField label="Certificate authority date">May 21, 2061, 19:04 (UTC-05:00)</DetailField>
              <DetailField label="DB instance certificate expiration date">March 29, 2026, 10:19 (UTC-05:00)</DetailField>
            </DetailList>
          </DetailColumn>
        </DetailGrid>
      </Card>
    </Content>
  );
}

function SystemBar() {
  return (
    <Taskbar>
      <TaskApps>
        {apps.map(([id, name, mark, alert]) => (
          <TaskApp key={id} aria-label={name} $mark={mark} $alert={alert}>{appIcons[id]}</TaskApp>
        ))}
      </TaskApps>
      <Tray>
        <TrayButton aria-label="Hidden icons"><Svg s={14} vb="0 0 14 14"><path d="M1.500 10L7 4l5.500 6" /></Svg></TrayButton>
        <TrayButton aria-label="OneDrive"><Svg s={20} h={18} vb="0 0 20 18" w={1.5}><path d="M5 16a4.500 4.500 0 01-.5-9 6 6 0 0111-1A5 5 0 0115 16z" fill="#8e8e8e" strokeWidth="0" /><path d="M2 1l17 16" /></Svg></TrayButton>
        <TrayButton aria-label="Updates"><Svg s={22} h={24} vb="0 0 22 24" w={1.5}><path d="M2 11a8.500 8.500 0 0117-3M19 2v6h-6M8 20a8.500 8.500 0 01-5-4M2 22v-6h5" /><circle cx="15" cy="18" r="5.500" fill="#f99a10" strokeWidth="0" /></Svg></TrayButton>
        <TrayButton $w={56} aria-label="Language English">ENG</TrayButton>
        <TrayStatus aria-label="Network, volume, battery">
          <Svg s={20} h={18} vb="0 0 20 18" w={1.5}><path d="M1 7a12.500 12.500 0 0118 0M4 10a8.500 8.500 0 0112 0M6.500 13a5 5 0 017 0" /><circle cx="10" cy="15.500" r="1.800" fill="currentColor" strokeWidth="0" /></Svg>
          <Svg s={20} h={18} vb="0 0 20 18" w={1.5}><path d="M1.500 6.500v5H5l4.500 4V2.500L5 6.500zM12 6.500a4 4 0 010 5M14.500 4a7.500 7.500 0 010 10" /><path d="M17 2a10 10 0 010 14" stroke="#666" /></Svg>
          <Svg s={20} h={18} vb="0 0 20 18" w={1.5}><path d="M8 3.500h8a1.500 1.500 0 011.500 1.500v9a1.500 1.500 0 01-1.500 1.500H3A1.500 1.500 0 011.500 14v-3M19 7.500v4" /><path d="M4 0L1 6h2.500L2.500 11 7 4.500H4.500L6 0z" fill="currentColor" strokeWidth="0" /></Svg>
        </TrayStatus>
        <Clock>10:46 AM<br />3/29/2025</Clock>
      </Tray>
    </Taskbar>
  );
}

export default function App() {
  return (
    <Screen>
      <GlobalStyle />
      <Browser />
      <Viewport>
        <Page>
          <AwsBar />
          <Breadcrumbs />
          <Workspace>
            <SideNav />
            <DatabasePage />
          </Workspace>
          <Footer>
            <FooterButton><ShellIcon />CloudShell</FooterButton>
            <FooterButton>Feedback</FooterButton>
            <Legal>
              <Copyright>© 2025, Amazon Web Services, Inc. or its affiliates.</Copyright>
              <a href="#privacy">Privacy</a>
              <a href="#terms">Terms</a>
              <a href="#cookies">Cookie preferences</a>
            </Legal>
          </Footer>
        </Page>
        <ScrollTrack>
          <Svg s={13} h={12} vb="0 0 13 12" w={0}><path d="M6.500 0L13 12H0z" fill="#8b8b8b" /></Svg>
          <ScrollBody><ScrollThumb /></ScrollBody>
          <Svg s={13} h={12} vb="0 0 13 12" w={0}><path d="M6.500 12L13 0H0z" fill="#8b8b8b" /></Svg>
        </ScrollTrack>
      </Viewport>
      <SystemBar />
    </Screen>
  );
}
